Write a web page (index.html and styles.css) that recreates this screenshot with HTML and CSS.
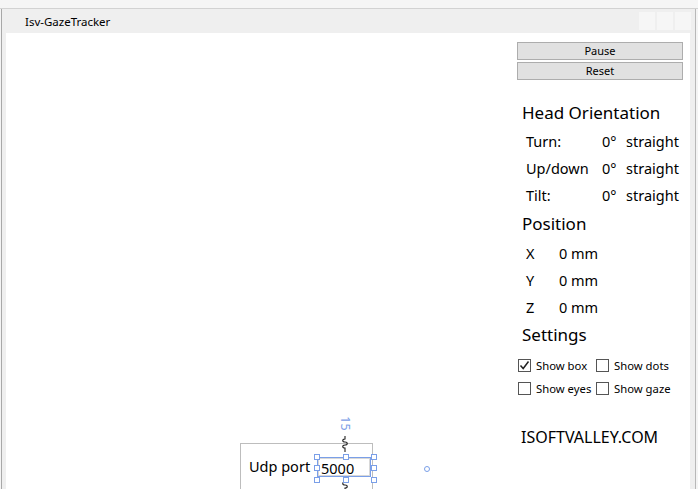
FILE: index.html
```html
<html><head>
<title>Isv-GazeTracker</title>
<link rel="stylesheet" href="styles.css">
</head>
<body>
<div class="strip"></div>
<div class="window">
  <div class="titlebar">
    <span class="title">Isv-GazeTracker</span>
    <div class="tbtns"><span></span><span></span><span></span></div>
  </div>
  <div class="client">
    <div class="canvas">
      <div class="udp">
        <span class="udplabel">Udp port</span>
        <span class="udpinput">5000</span>
        <span class="num">15</span>
        <svg class="spring top" width="8" height="16" viewBox="0 0 8 16"><path d="M4 0v3c-3 0-3 3 0 3s3 3 0 3-3 3 0 3v4" fill="none" stroke="#222" stroke-width="1.1"/></svg>
        <svg class="spring bot" width="8" height="10" viewBox="0 0 8 10"><path d="M4 0v1c-3 0-3 3 0 3s3 3 0 3v3" fill="none" stroke="#222" stroke-width="1.1"/></svg>
        <i class="h h1"></i><i class="h h2"></i><i class="h h3"></i>
        <i class="h h4"></i><i class="h h5"></i>
        <i class="h h6"></i><i class="h h7"></i><i class="h h8"></i>
        <i class="dot"></i>
      </div>
    </div>
    <div class="panel">
      <div class="btn">Pause</div>
      <div class="btn">Reset</div>
      <div class="head first">Head Orientation</div>
      <table class="rows orient">
        <tr><td>Turn:</td><td>0°</td><td>straight</td></tr>
        <tr><td>Up/down</td><td>0°</td><td>straight</td></tr>
        <tr><td>Tilt:</td><td>0°</td><td>straight</td></tr>
      </table>
      <div class="head pos-head">Position</div>
      <table class="rows pos">
        <tr><td>X</td><td>0 mm</td></tr>
        <tr><td>Y</td><td>0 mm</td></tr>
        <tr><td>Z</td><td>0 mm</td></tr>
      </table>
      <div class="head">Settings</div>
      <div class="checks">
        <div class="chk"><span class="box"><svg width="11" height="11" viewBox="0 0 11 11"><path d="M1.5 5.5l2.7 3 5.3-7" fill="none" stroke="#222" stroke-width="1.5"/></svg></span>Show box</div>
        <div class="chk"><span class="box"></span>Show dots</div>
        <div class="chk"><span class="box"></span>Show eyes</div>
        <div class="chk"><span class="box"></span>Show gaze</div>
      </div>
      <div class="brand">ISOFTVALLEY.COM</div>
    </div>
  </div>
</div>
</body>
</html>
```

FILE: styles.css
```css
body { margin: 0; background: #f4f4f4; font-family: "Noto Sans", "Open Sans", sans-serif; color: #000; overflow: hidden; }
.strip { height: 8px; background: #f5f5f5; border-bottom: 1px solid #d2d2d2; }
.window { display: flex; flex-direction: column; height: 480px; margin-left: 1px; border-left: 1px solid #a8a8a8; background: #efefef; padding-left: 4px; margin-right: 2px; border-right: 1px solid #b8b8b8; padding-right: 5px; }
.titlebar { height: 24px; display: flex; align-items: center; justify-content: space-between; }
.title { font-size: 11.5px; padding-left: 19px; }
.tbtns { display: flex; gap: 2px; margin-right: -1px; }
.tbtns span { width: 16px; height: 18px; background: #f6f6f6; }
.client { flex: 1; background: #fff; display: flex; }
.canvas { width: 511px; display: flex; flex-direction: column; justify-content: flex-end; }
.udp { position: relative; margin-left: 234px; width: 131px; height: 45px; border: 1px solid #bdbdbd; border-bottom: none; }
.udplabel { position: absolute; left: 8px; top: 12px; font-size: 14.5px; }
.udpinput { position: absolute; left: 76px; top: 13px; width: 54px; height: 20px; border: 1px solid #7a9fe8; font-size: 14.5px; line-height: 20px; padding-left: 3px; box-sizing: border-box; box-shadow: inset 0 0 0 1px #d8d8d8; }
.num { position: absolute; left: 97px; top: -29px; font-size: 12.5px; color: #7c9de6; transform: rotate(90deg); }
.spring { position: absolute; left: 100px; }
.spring.top { top: -8px; }
.spring.bot { top: 37px; }
.h { position: absolute; width: 4px; height: 4px; border: 1px solid #7a9fe8; background: #fff; }
.h1 { left: 73px; top: 10px; } .h2 { left: 102px; top: 10px; } .h3 { left: 130px; top: 10px; }
.h4 { left: 73px; top: 21px; } .h5 { left: 130px; top: 21px; }
.h6 { left: 73px; top: 33px; } .h7 { left: 102px; top: 33px; } .h8 { left: 130px; top: 33px; }
.dot { position: absolute; left: 183px; top: 22px; width: 4px; height: 4px; border: 1px solid #7a9fe8; border-radius: 50%; }
.panel { width: 166px; padding-top: 9px; }
.btn { height: 16px; border: 1px solid #adadad; background: #e1e1e1; font-size: 11px; line-height: 16px; text-align: center; margin-bottom: 2px; }
.head { font-size: 17px; line-height: 24px; padding-left: 5px; margin-top: 3px; }
.head.first { margin-top: 21px; }
.head.pos-head { margin-top: 4px; }
.rows { border-collapse: collapse; margin-left: 7px; font-size: 14.5px; }
.rows td { padding: 0 2px; height: 27px; }
.orient { margin-top: 2px; }
.pos { margin-top: 3px; }
.orient td:first-child { width: 72px; }
.orient td:nth-child(2) { width: 20px; }
.pos td:first-child { width: 29px; }
.checks { display: grid; grid-template-columns: 78px auto; margin-top: 7px; margin-left: 1px; font-size: 11.3px; }
.chk { display: flex; align-items: center; height: 23px; }
.box { width: 11px; height: 11px; border: 1px solid #555; margin-right: 5px; display: flex; }
.brand { font-size: 16px; line-height: 24px; padding-left: 4px; margin-top: 25px; }
```
